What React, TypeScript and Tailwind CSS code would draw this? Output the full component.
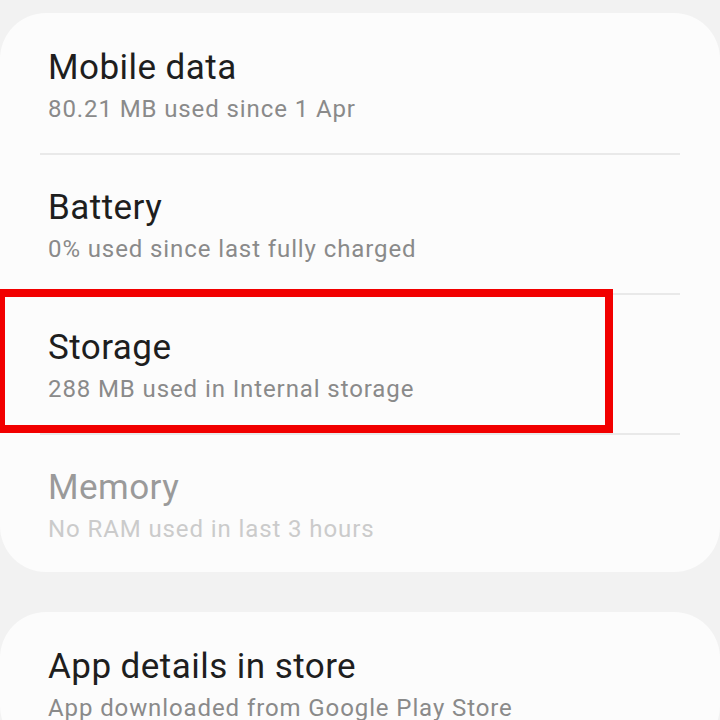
import React from 'react';

interface Row {
  title: string;
  subtitle: string;
  disabled?: boolean;
}

const ROWS: Row[] = [
  { title: 'Mobile data', subtitle: '80.21 MB used since 1 Apr' },
  { title: 'Battery', subtitle: '0% used since last fully charged' },
  { title: 'Storage', subtitle: '288 MB used in Internal storage' },
  { title: 'Memory', subtitle: 'No RAM used in last 3 hours', disabled: true },
];

function SettingRow({ row, last }: { row: Row; last?: boolean }) {
  return (
    <div className={`px-12 pt-[33px] ${last ? 'h-[137px]' : 'h-[138px]'}`}>
      <div
        className={`text-[35px] leading-[40px] tracking-[0.45px] ${
          row.disabled ? 'text-[#9a9a9a]' : 'text-[#1e1e1e]'
        }`}
      >
        {row.title}
      </div>
      <div
        className={`mt-[5px] text-[24px] leading-[32px] tracking-[0.9px] ${
          row.disabled ? 'text-[#cbcbcb]' : 'text-[#8a8a8a]'
        }`}
      >
        {row.subtitle}
      </div>
    </div>
  );
}

export default function App() {
  return (
    <div
      className="h-[720px] w-[720px] overflow-hidden bg-[#f2f2f2] pt-[13px]"
      style={{ fontFamily: 'Roboto, "Noto Sans", sans-serif' }}
    >
      {/* Usage card */}
      <div className="relative rounded-[46px] bg-[#fcfcfc] pt-[2px]">
        {ROWS.map((row, i) => (
          <div key={row.title}>
            <SettingRow row={row} last={i === ROWS.length - 1} />
            {i < ROWS.length - 1 && <div className="mx-10 h-[2px] bg-[#e9e9e9]" />}
          </div>
        ))}

        {/* Highlight box */}
        <div className="absolute left-[-3px] top-[276px] h-[144px] w-[616px] border-[8px] border-[#f20000]" />
      </div>

      {/* Store card */}
      <div className="mt-[40px] rounded-[46px] bg-[#fcfcfc] pt-[2px]">
        <SettingRow row={{ title: 'App details in store', subtitle: 'App downloaded from Google Play Store' }} />
      </div>
    </div>
  );
}
